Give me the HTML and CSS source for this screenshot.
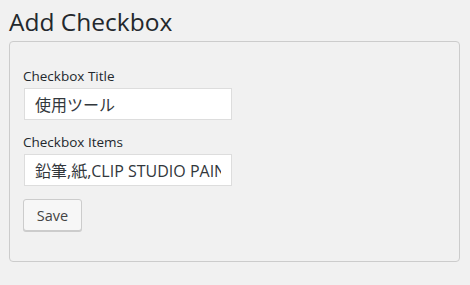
FILE: index.html
```html
<!DOCTYPE html>
<html lang="en">

<head>
    <meta charset="UTF-8">
    <meta name="viewport" content="width=device-width, initial-scale=1.0">
    <title>Add Checkbox</title>
    <link rel="stylesheet" href="styles.css">
</head>

<body>
    <h1>Add Checkbox</h1>
    <div class="box">
        <div class="field">
            <label class="label" for="title">Checkbox Title</label>
            <input type="text" id="title" class="text-input" value="使用ツール">
        </div>
        <div class="field">
            <label class="label" for="items">Checkbox Items</label>
            <input type="text" id="items" class="text-input" value="鉛筆,紙,CLIP STUDIO PAINT">
        </div>
        <button class="button">Save</button>
    </div>
</body>

</html>
```

FILE: styles.css
```css
body {
    font-family: "Open Sans", "Noto Sans CJK JP", sans-serif;
    margin: 0;
    padding: 0 10px 0 9px;
    background-color: #f1f1f1;
    color: #23282d;
}

h1 {
    font-size: 24.5px;
    font-weight: 400;
    line-height: 29px;
    margin: 0;
    padding: 7px 0 5px;
}

.box {
    border: 1px solid #ccc;
    border-radius: 4px;
    padding: 25px 13px 28px;
    height: 166px;
}

.field {
    display: flex;
    flex-direction: column;
    margin-bottom: 13px;
}

.label {
    font-size: 13.5px;
    line-height: 18px;
    margin-bottom: 3px;
}

.text-input {
    width: 208px;
    height: 32px;
    box-sizing: border-box;
    border: 1px solid #ddd;
    background-color: #fff;
    padding: 0 10px;
    font-family: "Open Sans", "Noto Sans CJK JP", sans-serif;
    font-size: 16px;
    color: #32373c;
    margin-left: 1px;
}

.button {
    width: 59px;
    height: 32px;
    border: 1px solid #ccc;
    border-radius: 3px;
    background-color: #f7f7f7;
    box-shadow: 0 1px 0 #ccc;
    font-family: "Open Sans", sans-serif;
    font-size: 14.5px;
    color: #444;
    padding: 0;
}
```
